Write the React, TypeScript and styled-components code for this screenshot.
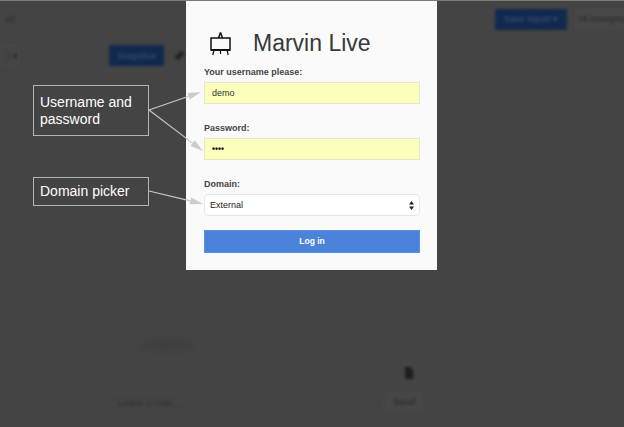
import React from "react";
import styled, { createGlobalStyle } from "styled-components";

const GlobalStyle = createGlobalStyle`
  html, body {
    margin: 0;
    padding: 0;
    background: #444444;
    font-family: "Liberation Sans", Arial, sans-serif;
  }
`;

const Page = styled.div`
  position: relative;
  width: 624px;
  height: 427px;
  overflow: hidden;
  background: #444444;
  border-top: 1px solid #7a7a7a;
  box-sizing: border-box;
`;

const Backdrop = styled.div`
  width: 624px;
  height: 426px;
  box-sizing: border-box;
  display: flex;
  flex-direction: column;
  filter: blur(1.4px);
`;

const TopBar = styled.div`
  display: flex;
  align-items: center;
  gap: 8px;
  height: 22px;
  margin-top: 7px;
  padding-left: 5px;
`;

const BrandStub = styled.div`
  flex: none;
  width: 482px;
  font-size: 9px;
  color: #2d2d2d;
  text-align: left;
`;

const BlurButton = styled.div<{ $dark?: boolean; $width?: number }>`
  display: flex;
  flex: none;
  align-items: center;
  justify-content: center;
  width: ${(p) => (p.$width ? `${p.$width}px` : "auto")};
  height: 21px;
  box-sizing: border-box;
  padding: 0 4px;
  font-size: 9px;
  white-space: nowrap;
  border-radius: 1px;
  background: ${(p) => (p.$dark ? "#12294f" : "#474747")};
  color: ${(p) => (p.$dark ? "#3f5474" : "#222222")};
`;

const UserButton = styled(BlurButton)`
  justify-content: flex-start;
  height: 22px;
`;

const Toolbar = styled.div`
  display: flex;
  align-items: center;
  height: 21px;
  margin-top: 15px;
`;

const LeftStub = styled(BlurButton)`
  width: 19px;
  padding: 0;
  margin-right: 90px;
  justify-content: flex-end;
  background: #444444;
  color: #262626;
  border: 1px solid #4b4b4b;
`;

const PinMark = styled.div`
  width: 5px;
  height: 9px;
  margin-left: 13px;
  background: #222222;
  transform: rotate(45deg);
`;

const NoteArea = styled.div`
  margin-top: auto;
  padding: 0 201px 15px 109px;
  display: flex;
  flex-direction: column;
  gap: 9px;
`;

const ChartSmudge = styled.div`
  width: 60px;
  height: 12px;
  margin: 0 0 2px 28px;
  border-radius: 50%;
  background: #3e3e3e;
  filter: blur(4px);
`;

const AttachRow = styled.div`
  display: flex;
  justify-content: flex-end;
`;

const AttachBox = styled.div`
  width: 29px;
  height: 21px;
  display: flex;
  align-items: center;
  justify-content: center;
  border: 1px solid #4a4a4a;
  box-sizing: border-box;
`;

const NoteRow = styled.div`
  display: flex;
  gap: 2px;
  height: 20px;
`;

const NoteInput = styled.div`
  flex: 1;
  font-size: 9.5px;
  line-height: 20px;
  padding-left: 8px;
  color: #2c2c2c;
  border: 1px solid #494949;
`;

const SendBox = styled.div`
  width: 38px;
  text-align: center;
  font-size: 9.5px;
  line-height: 20px;
  color: #232323;
  background: #474747;
`;

const Modal = styled.div`
  position: absolute;
  top: -1px;
  left: 186px;
  width: 251px;
  height: 270px;
  box-sizing: border-box;
  padding: 30px 17px 0 18px;
  background: #fafafa;
`;

const Brand = styled.div`
  display: flex;
  align-items: center;
  height: 26px;
  margin-bottom: 11px;
`;

const BrandIcon = styled.svg`
  width: 23px;
  height: 26px;
  margin-left: 5px;
  margin-right: 21px;
  flex: none;
`;

const BrandTitle = styled.div`
  font-size: 23px;
  line-height: 26px;
  color: #383838;
  white-space: nowrap;
`;

const Field = styled.div`
  height: 56px;
`;

const Label = styled.div`
  font-size: 9px;
  font-weight: bold;
  line-height: 10px;
  margin-bottom: 5px;
  color: #444444;
`;

const TextValue = styled.div`
  height: 22px;
  box-sizing: border-box;
  border: 1px solid #e6e8c8;
  background: #fbffbb;
  padding-left: 7px;
  font-size: 9px;
  line-height: 20px;
  color: #333333;
`;

const Dots = styled.span`
  font-size: 8.5px;
  color: #111111;
  font-weight: bold;
`;

const SelectBox = styled.div`
  height: 22px;
  box-sizing: border-box;
  display: flex;
  align-items: center;
  justify-content: space-between;
  padding: 0 5px;
  background: #ffffff;
  border: 1px solid #e6e6e6;
  border-radius: 4px;
  font-size: 9px;
  color: #222222;
`;

const LoginButton = styled.div`
  height: 23px;
  margin-top: -5px;
  background: #4b83db;
  border: 1px solid #5a8ee0;
  box-sizing: border-box;
  text-align: center;
  color: #ffffff;
  font-size: 8.5px;
  font-weight: bold;
  line-height: 20px;
`;

const Callout = styled.div<{ $top: number; $height: number }>`
  position: absolute;
  left: 33px;
  top: ${(p) => p.$top}px;
  width: 116px;
  height: ${(p) => p.$height}px;
  box-sizing: border-box;
  padding: 0 0 0 6px;
  display: flex;
  align-items: center;
  background: #444444;
  border: 1px solid #b5b5b5;
  color: #ffffff;
  font-size: 14px;
  line-height: 17px;
`;

const Arrows = styled.svg`
  position: absolute;
  top: -1px;
  left: 0;
  width: 624px;
  height: 427px;
  pointer-events: none;
`;

const Arrow = ({ x1, y1, x2, y2 }: { x1: number; y1: number; x2: number; y2: number }) => {
  const a = Math.atan2(y2 - y1, x2 - x1);
  const len = 13;
  const w = 3.5;
  const bx = x2 - Math.cos(a) * len;
  const by = y2 - Math.sin(a) * len;
  const nx = -Math.sin(a) * w;
  const ny = Math.cos(a) * w;
  return (
    <>
      <line x1={x1} y1={y1} x2={bx} y2={by} stroke="#c8c8c8" strokeWidth="1.2" />
      <polygon points={`${x2},${y2} ${bx + nx},${by + ny} ${bx - nx},${by - ny}`} fill="#cccccc" />
    </>
  );
};

const App: React.FC = () => {
  return (
    <>
      <GlobalStyle />
      <Page>
        <Backdrop>
          <TopBar>
            <BrandStub>ad</BrandStub>
            <BlurButton $dark $width={72}>
              Save report ▾
            </BlurButton>
            <UserButton $width={70}>Hi Anonymous</UserButton>
          </TopBar>
          <Toolbar>
            <LeftStub>t ▾</LeftStub>
            <BlurButton $dark $width={55}>
              Snapshot
            </BlurButton>
            <PinMark />
          </Toolbar>
          <NoteArea>
            <ChartSmudge />
            <AttachRow>
              <AttachBox>
                <svg width="10" height="12" viewBox="0 0 10 12">
                  <path d="M1 0h5l3 3v9H1z" fill="#1e1e1e" />
                </svg>
              </AttachBox>
            </AttachRow>
            <NoteRow>
              <NoteInput>Leave a note...</NoteInput>
              <SendBox>Send</SendBox>
            </NoteRow>
          </NoteArea>
        </Backdrop>

        <Modal>
          <Brand>
            <BrandIcon viewBox="0 0 23 26" fill="none" stroke="#111111" strokeWidth="1.5">
              <rect x="2" y="8" width="19" height="12" />
              <path d="M11.5 2.5 9.5 8M11.5 2.5 13.5 8" />
              <path d="M2 20h19" strokeWidth="2" />
              <path d="M5 20 3.8 25M18 20 19.2 25M11.5 20v4" strokeWidth="1.2" />
            </BrandIcon>
            <BrandTitle>Marvin Live</BrandTitle>
          </Brand>
          <Field>
            <Label>Your username please:</Label>
            <TextValue>demo</TextValue>
          </Field>
          <Field>
            <Label>Password:</Label>
            <TextValue>
              <Dots>••••</Dots>
            </TextValue>
          </Field>
          <Field>
            <Label>Domain:</Label>
            <SelectBox>
              External
              <svg width="5" height="9" viewBox="0 0 5 9">
                <path d="M2.5 0 5 3.4H0zM2.5 9 0 5.6h5z" fill="#222222" />
              </svg>
            </SelectBox>
          </Field>
          <LoginButton>Log in</LoginButton>
        </Modal>

        <Arrows viewBox="0 0 624 427">
          <Arrow x1={149} y1={110} x2={201} y2={92} />
          <Arrow x1={149} y1={110} x2={203} y2={151} />
          <Arrow x1={149} y1={191} x2={203} y2={204} />
        </Arrows>

        <Callout $top={84} $height={51}>
          Username and
          <br />
          password
        </Callout>
        <Callout $top={176} $height={29}>
          Domain picker
        </Callout>
      </Page>
    </>
  );
};

export default App;
